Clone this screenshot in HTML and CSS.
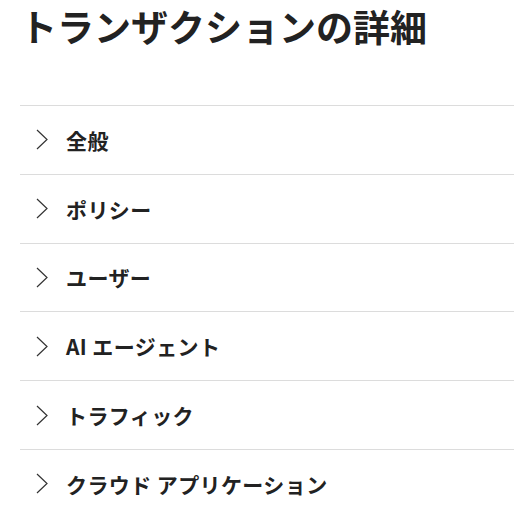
FILE: index.html
```html
<!DOCTYPE html>
<html lang="ja">
<head>
<meta charset="utf-8">
<link rel="stylesheet" href="styles.css">
</head>
<body>
<main class="page">
  <h1 class="title">トランザクションの詳細</h1>
  <ul class="sections">
    <li class="row"><svg class="chev" viewBox="0 0 12 21"><path d="M1 1 L11 10.5 L1 20"/></svg><span class="label">全般</span></li>
    <li class="row"><svg class="chev" viewBox="0 0 12 21"><path d="M1 1 L11 10.5 L1 20"/></svg><span class="label">ポリシー</span></li>
    <li class="row"><svg class="chev" viewBox="0 0 12 21"><path d="M1 1 L11 10.5 L1 20"/></svg><span class="label">ユーザー</span></li>
    <li class="row"><svg class="chev" viewBox="0 0 12 21"><path d="M1 1 L11 10.5 L1 20"/></svg><span class="label">AI エージェント</span></li>
    <li class="row"><svg class="chev" viewBox="0 0 12 21"><path d="M1 1 L11 10.5 L1 20"/></svg><span class="label">トラフィック</span></li>
    <li class="row"><svg class="chev" viewBox="0 0 12 21"><path d="M1 1 L11 10.5 L1 20"/></svg><span class="label">クラウド アプリケーション</span></li>
  </ul>
</main>
</body>
</html>
```
FILE: styles.css
```css
html, body {
  margin: 0;
  padding: 0;
  background: #fff;
}
body {
  font-family: "Noto Sans CJK JP", "Noto Sans", sans-serif;
  color: #222;
}
.page {
  padding: 5px 0 0 20px;
}
.title {
  margin: 0 0 57px 0;
  font-size: 37px;
  line-height: 43px;
  font-weight: 700;
  color: #222;
}
.sections {
  list-style: none;
  margin: 0;
  padding: 0;
}
.row {
  display: flex;
  align-items: center;
  height: 67.8px;
  border-top: 1px solid #dcdcdc;
}
.chev {
  width: 12px;
  height: 21px;
  margin-left: 16px;
  margin-right: 18px;
  fill: none;
  stroke: #333;
  stroke-width: 1.2;
}
.label {
  font-size: 21px;
  font-weight: 700;
  line-height: 28px;
  letter-spacing: 0.4px;
}
```
